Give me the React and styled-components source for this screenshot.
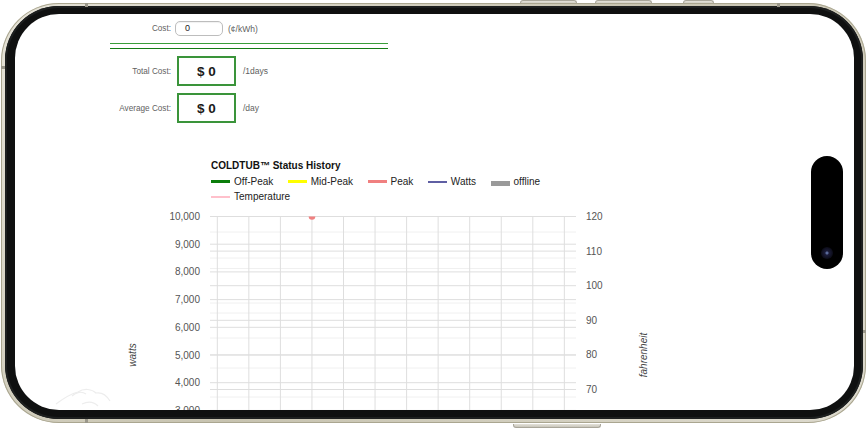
import React from 'react';
import styled, { createGlobalStyle } from 'styled-components';

const GlobalStyle = createGlobalStyle`
  html, body {
    margin: 0;
    padding: 0;
    background: #fff;
  }
  body {
    font-family: "Liberation Sans", Arial, sans-serif;
  }
`;

const Stage = styled.div`
  position: relative;
  width: 868px;
  height: 428px;
  box-sizing: border-box;
  padding: 3px 2px 5px 1px;
  overflow: hidden;
  background: #fff;
`;

const SideButton = styled.div`
  position: absolute;
  left: ${(p) => p.$x}px;
  width: ${(p) => p.$w}px;
  height: 4px;
  background: linear-gradient(#e4e2da, #c9c6ba);
  border: 1px solid #a9a69a;
  box-sizing: border-box;
  ${(p) =>
    p.$bottom
      ? 'bottom: 0; border-top: none; border-radius: 0 0 3px 3px;'
      : 'top: 0; border-bottom: none; border-radius: 3px 3px 0 0;'}
`;

const Shell = styled.div`
  position: relative;
  width: 865px;
  height: 420px;
  box-sizing: border-box;
  padding: 3px 3px 4px 4px;
  border-radius: 58px;
  background: linear-gradient(135deg, #e6e3d8, #c7c3b0 50%, #dedbcf);
  box-shadow: inset 0 0 0 1px #aaa690;
`;

const AntennaBand = styled.div`
  position: absolute;
  background: #9a978a;
  ${(p) => p.$pos}
`;

const Bezel = styled.div`
  height: 100%;
  box-sizing: border-box;
  padding: 8px 9px 9px 10px;
  border-radius: 54px;
  background: #0f1010;
  box-shadow: inset 0 0 0 2px #1d1f1f;
`;

const Screen = styled.div`
  position: relative;
  height: 100%;
  overflow: hidden;
  border-radius: 44px;
  background: #fff;
`;

const Island = styled.div`
  position: absolute;
  right: 11px;
  top: 142px;
  width: 32px;
  height: 113px;
  border-radius: 16px;
  background: #000;
  display: flex;
  justify-content: center;
  align-items: flex-end;
  padding-bottom: 10px;
  box-sizing: border-box;
`;

const Camera = styled.div`
  width: 12px;
  height: 12px;
  border-radius: 50%;
  background: radial-gradient(circle, #5a6a9a 0 1px, #1c1d3a 2px, #0b0b16 6px);
`;

const CostForm = styled.div`
  width: 278px;
  margin-left: 95px;
  padding-top: 7px;
`;

const FormRow = styled.div`
  display: grid;
  grid-template-columns: 61px auto 1fr;
  align-items: center;
  column-gap: ${(p) => (p.$boxed ? 6 : 4)}px;
  height: ${(p) => (p.$boxed ? 30 : 15)}px;
  margin-top: ${(p) => p.$top || 0}px;
`;

const Label = styled.span`
  text-align: right;
  font-size: 8.2px;
  color: #5f5f5f;
  white-space: nowrap;
`;

const Suffix = styled.span`
  font-size: 8.5px;
  color: #5f5f5f;
  margin-left: 1px;
`;

const CostInput = styled.div`
  width: 48px;
  height: 15px;
  box-sizing: border-box;
  border: 1px solid #bdbdbd;
  border-radius: 5px;
  background: #fff;
  box-shadow: inset 0 1px 1px rgba(0, 0, 0, 0.06);
  padding-left: 9px;
  font-size: 9px;
  line-height: 13px;
  color: #222;
`;

const DoubleRule = styled.div`
  margin-top: 7px;
  height: 4px;
  border-top: 1.5px solid #3a9e3a;
  border-bottom: 1.5px solid #167d16;
`;

const CostBox = styled.div`
  width: 59px;
  height: 30px;
  box-sizing: border-box;
  border: 2px solid #3a943a;
  display: flex;
  align-items: center;
  justify-content: center;
  font-size: 13.5px;
  font-weight: bold;
  color: #1a1a1a;
`;

const ChartHead = styled.div`
  padding-left: 196px;
  margin-top: 37px;
`;

const ChartTitle = styled.div`
  font-size: 10px;
  font-weight: bold;
  line-height: 12px;
  color: #111;
`;

const LegendRow = styled.div`
  display: flex;
  align-items: center;
  column-gap: 14.5px;
  height: 15px;
  margin-top: ${(p) => p.$top || 0}px;
`;

const LegendItem = styled.div`
  display: flex;
  align-items: center;
  font-size: 10px;
  color: #222;
`;

const Swatch = styled.span`
  display: inline-block;
  width: 19px;
  height: ${(p) => p.$h}px;
  margin-right: 4px;
  background: ${(p) => p.$color};
  transform: translateY(${(p) => p.$dy || 0}px);
`;

const ChartSvg = styled.svg`
  display: block;
  font-family: "Liberation Sans", Arial, sans-serif;
`;

const legend = [
  [
    { label: 'Off-Peak', color: '#0b7d0b', h: 3 },
    { label: 'Mid-Peak', color: '#ffff00', h: 3 },
    { label: 'Peak', color: '#f08080', h: 3 },
    { label: 'Watts', color: '#5f5fa3', h: 2 },
    { label: 'offline', color: '#9a9a9a', h: 5, dy: 2 },
  ],
  [{ label: 'Temperature', color: '#ffc0cb', h: 2 }],
];

const wattTicks = ['10,000', '9,000', '8,000', '7,000', '6,000', '5,000', '4,000', '3,000'];
const tempTicks = ['120', '110', '100', '90', '80', '70'];
const faintLines = [232, 258, 268.5, 303, 313, 338, 368, 397];

const Chart = () => {
  const left = wattTicks.map((_, i) => 216.5 + i * 27.7);
  const right = tempTicks.map((_, i) => 216.5 + i * 34.6);
  const cols = Array.from({ length: 12 }, (_, k) => 217.3 + k * 31.55);

  return (
    <ChartSvg width="839" height="210" viewBox="15 204 839 210">
      {faintLines.map((y) => (
        <line key={'f' + y} x1="210" x2="576" y1={y} y2={y} stroke="#f0f0f0" strokeWidth="1" />
      ))}
      {[...left, ...right].map((y, i) => (
        <line key={'h' + i} x1="210" x2="576" y1={y} y2={y} stroke="#dedede" strokeWidth="1" />
      ))}
      {cols.map((x) => (
        <line key={'v' + x} x1={x} x2={x} y1="216.5" y2="420" stroke="#dedede" strokeWidth="1" />
      ))}
      <path d="M308.7 216.5 A3.3 3.3 0 0 0 315.3 216.5 Z" fill="#f08080" />

      {wattTicks.map((t, i) => (
        <text key={t} x="200" y={left[i]} dy="0.35em" textAnchor="end" fontSize="10" fill="#555">
          {t}
        </text>
      ))}
      {tempTicks.map((t, i) => (
        <text key={t} x="586" y={right[i]} dy="0.35em" fontSize="10" fill="#555">
          {t}
        </text>
      ))}
      <text x="136" y="355" textAnchor="middle" fontSize="10" fontStyle="italic" fill="#444" transform="rotate(-90 136 355)">
        watts
      </text>
      <text x="647" y="355" textAnchor="middle" fontSize="10" fontStyle="italic" fill="#444" transform="rotate(-90 647 355)">
        fahrenheit
      </text>

      {/* faint watermark in the corner */}
      <g fill="none" stroke="#ededed" strokeWidth="1.2">
        <path d="M56 404 C64 398 70 394 78 392 C84 388 92 389 96 393 C102 392 107 396 110 401" />
        <path d="M72 396 C76 392 82 391 86 394" />
        <path d="M82 404 C88 401 94 402 98 406" />
      </g>
    </ChartSvg>
  );
};

const App = () => (
  <>
    <GlobalStyle />
    <Stage>
      <SideButton $x={520} $w={57} />
      <SideButton $x={595} $w={57} />
      <SideButton $x={683} $w={31} />
      <SideButton $x={513} $w={88} $bottom />
      <Shell>
        <AntennaBand $pos="left: 84px; top: 0; width: 3px; height: 4px;" />
        <AntennaBand $pos="left: 776px; top: 0; width: 3px; height: 4px;" />
        <AntennaBand $pos="left: 0; top: 63px; width: 4px; height: 3px;" />
        <AntennaBand $pos="left: 84px; bottom: 0; width: 3px; height: 4px;" />
        <AntennaBand $pos="right: 0; top: 327px; width: 3px; height: 3px;" />
        <Bezel>
          <Screen>
            <CostForm>
              <FormRow>
                <Label>Cost:</Label>
                <CostInput>0</CostInput>
                <Suffix>(¢/kWh)</Suffix>
              </FormRow>
              <DoubleRule />
              <FormRow $boxed $top={7}>
                <Label>Total Cost:</Label>
                <CostBox>$ 0</CostBox>
                <Suffix>/1days</Suffix>
              </FormRow>
              <FormRow $boxed $top={7}>
                <Label>Average Cost:</Label>
                <CostBox>$ 0</CostBox>
                <Suffix>/day</Suffix>
              </FormRow>
            </CostForm>

            <ChartHead>
              <ChartTitle>COLDTUB™ Status History</ChartTitle>
              {legend.map((row, r) => (
                <LegendRow key={r} $top={r === 0 ? 2 : 0}>
                  {row.map((item) => (
                    <LegendItem key={item.label}>
                      <Swatch $color={item.color} $h={item.h} $dy={item.dy} />
                      {item.label}
                    </LegendItem>
                  ))}
                </LegendRow>
              ))}
            </ChartHead>
            <Chart />

            <Island>
              <Camera />
            </Island>
          </Screen>
        </Bezel>
      </Shell>
    </Stage>
  </>
);

export default App;
